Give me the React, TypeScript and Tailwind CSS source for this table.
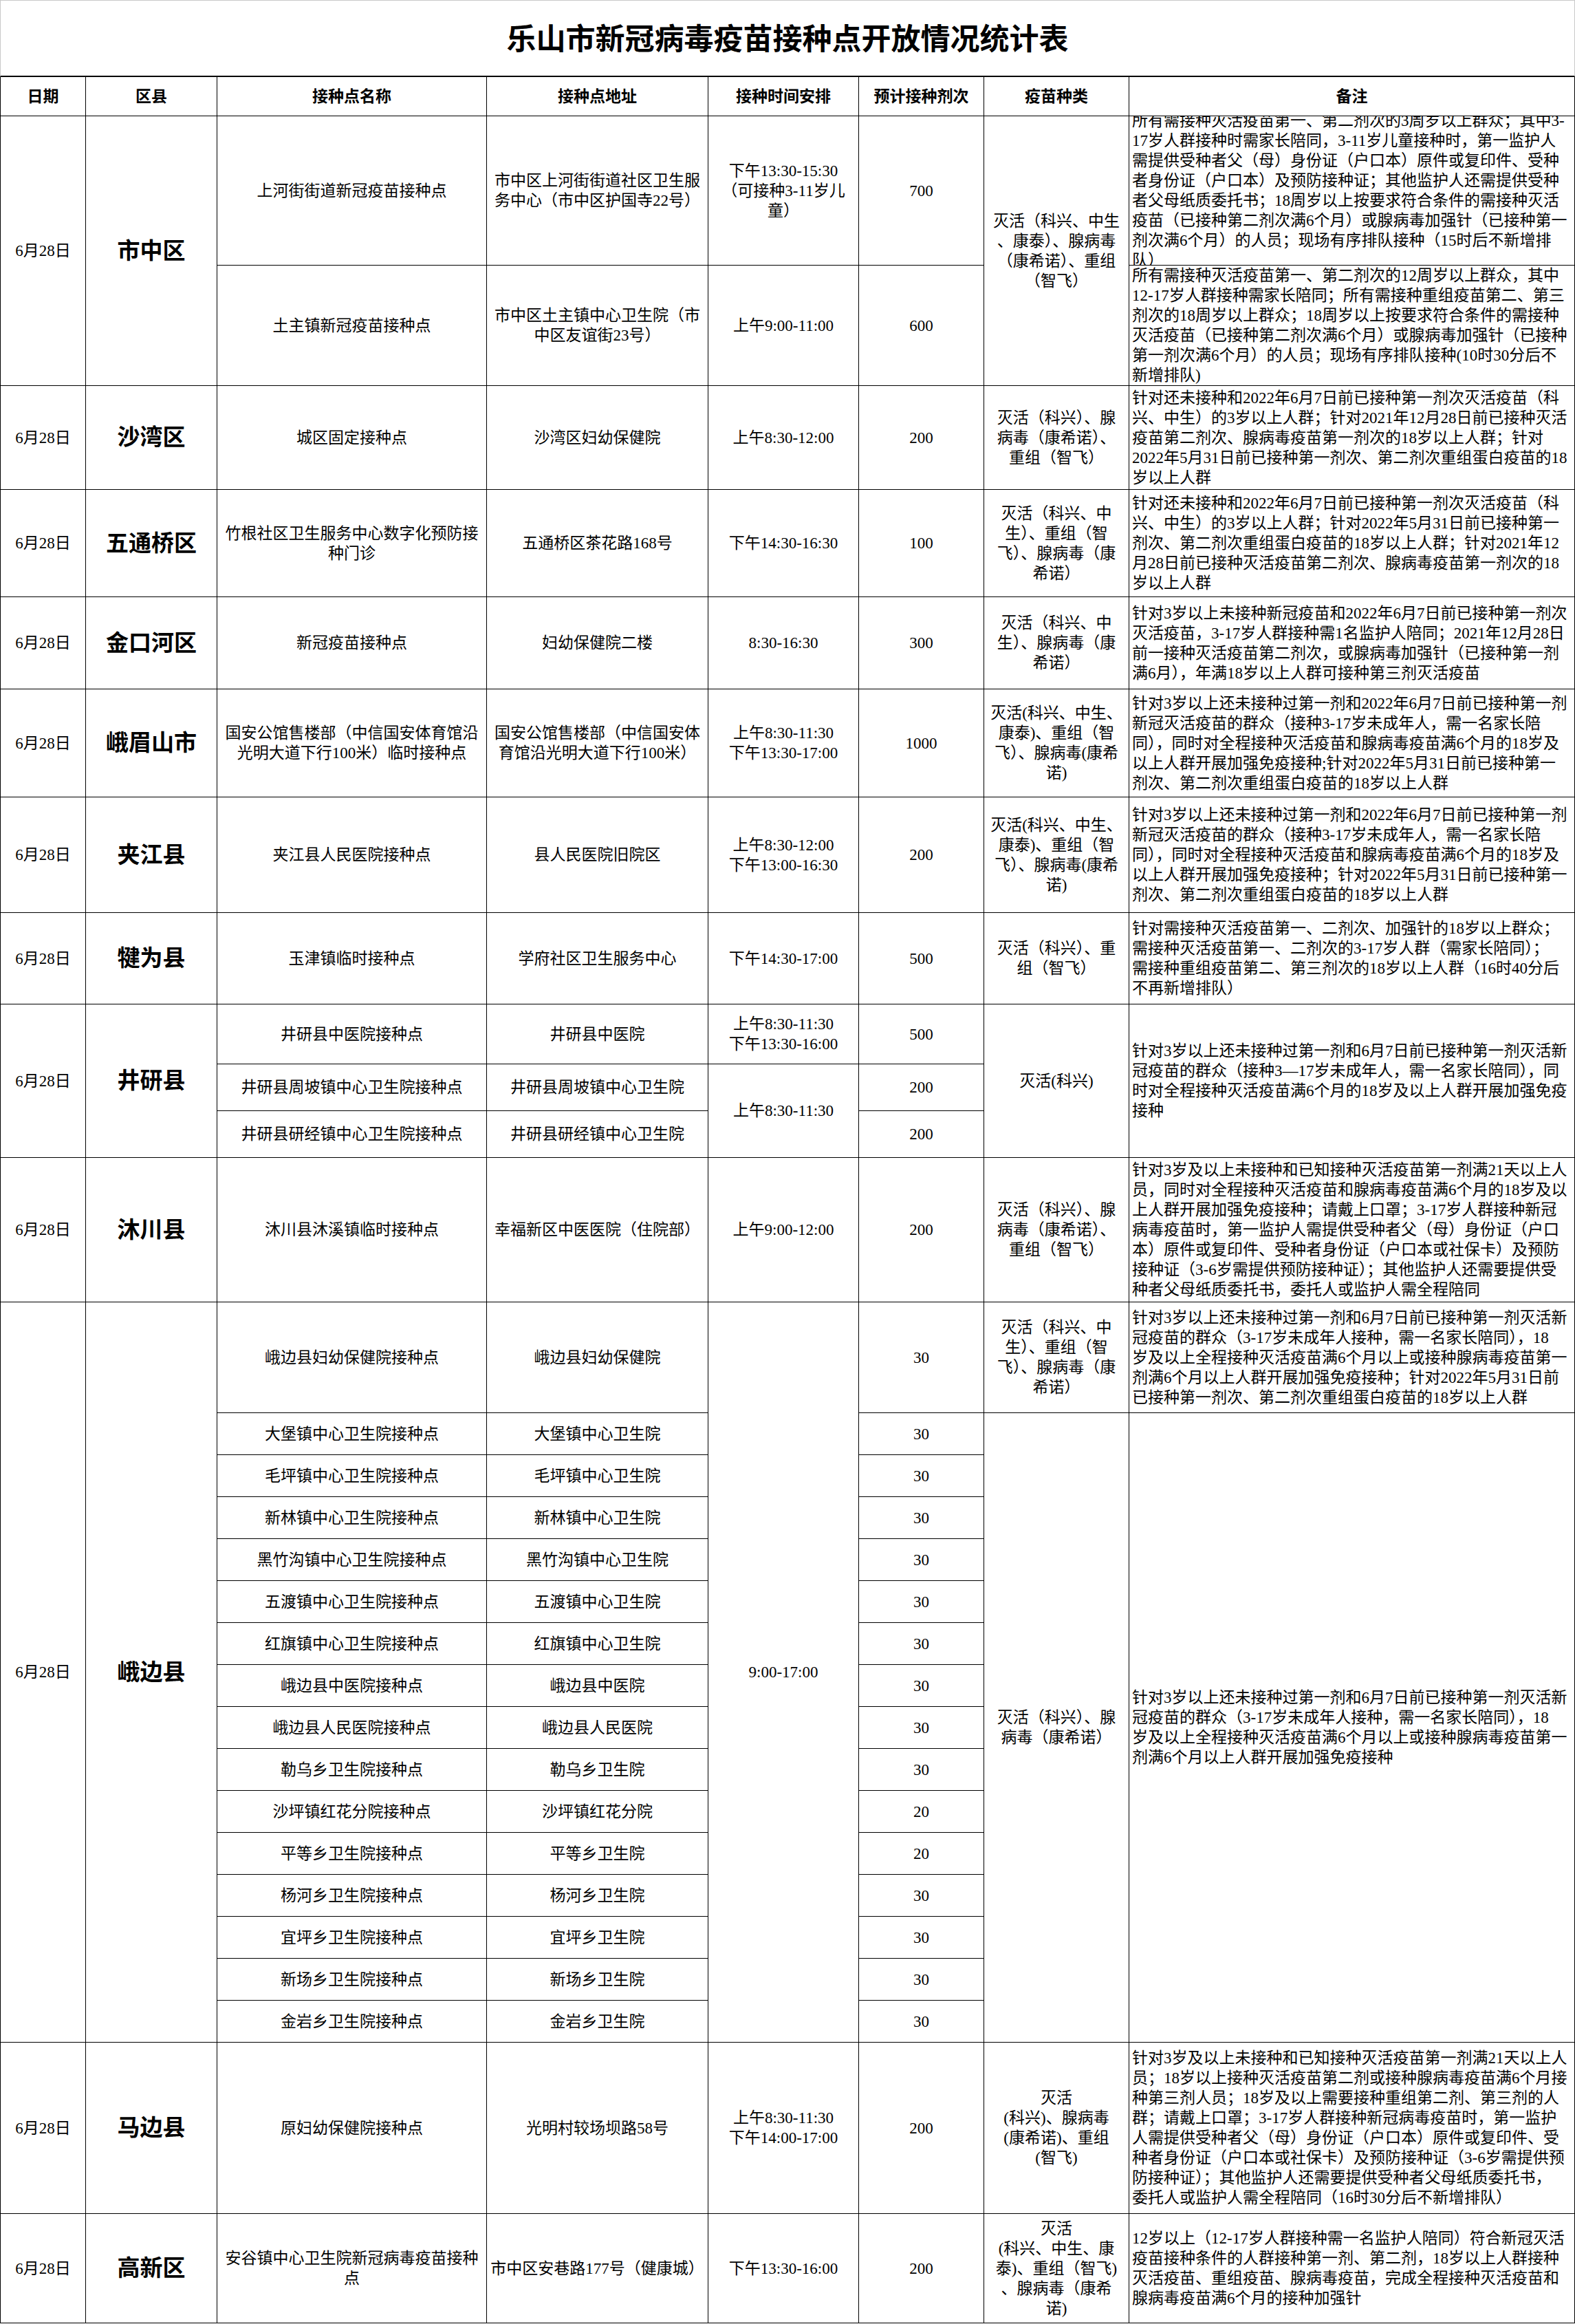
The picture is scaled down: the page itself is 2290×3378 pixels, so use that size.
import React from 'react';

type Cell = {
  t: string[];
  span?: string;
  kind?: 'head' | 'district' | 'remark';
};

const kindClass = {
  plain: 'justify-center text-center text-[23px] leading-[29px]',
  head: 'justify-center text-center text-[23px] leading-[29px] font-bold',
  district: 'justify-center text-center text-[33px] leading-[40px] font-bold',
  remark: 'justify-start text-left text-[23px] leading-[29px] pl-[4px]',
};

const D = '6月28日';

const ebian: [string, string, string][] = [
  ['大堡镇中心卫生院接种点', '大堡镇中心卫生院', '30'],
  ['毛坪镇中心卫生院接种点', '毛坪镇中心卫生院', '30'],
  ['新林镇中心卫生院接种点', '新林镇中心卫生院', '30'],
  ['黑竹沟镇中心卫生院接种点', '黑竹沟镇中心卫生院', '30'],
  ['五渡镇中心卫生院接种点', '五渡镇中心卫生院', '30'],
  ['红旗镇中心卫生院接种点', '红旗镇中心卫生院', '30'],
  ['峨边县中医院接种点', '峨边县中医院', '30'],
  ['峨边县人民医院接种点', '峨边县人民医院', '30'],
  ['勒乌乡卫生院接种点', '勒乌乡卫生院', '30'],
  ['沙坪镇红花分院接种点', '沙坪镇红花分院', '20'],
  ['平等乡卫生院接种点', '平等乡卫生院', '20'],
  ['杨河乡卫生院接种点', '杨河乡卫生院', '30'],
  ['宜坪乡卫生院接种点', '宜坪乡卫生院', '30'],
  ['新场乡卫生院接种点', '新场乡卫生院', '30'],
  ['金岩乡卫生院接种点', '金岩乡卫生院', '30'],
];

const rows: Cell[][] = [
  ['日期', '区县', '接种点名称', '接种点地址', '接种时间安排', '预计接种剂次', '疫苗种类', '备注'].map(
    (h): Cell => ({ t: [h], kind: 'head' })
  ),
  // 市中区
  [
    { t: [D], span: 'row-span-2' },
    { t: ['市中区'], span: 'row-span-2', kind: 'district' },
    { t: ['上河街街道新冠疫苗接种点'] },
    { t: ['市中区上河街街道社区卫生服', '务中心（市中区护国寺22号）'] },
    { t: ['下午13:30-15:30', '（可接种3-11岁儿', '童）'] },
    { t: ['700'] },
    { t: ['灭活（科兴、中生', '、康泰）、腺病毒', '（康希诺）、重组', '（智飞）'], span: 'row-span-2' },
    {
      kind: 'remark',
      t: [
        '所有需接种灭活疫苗第一、第二剂次的3周岁以上群众；其中3-',
        '17岁人群接种时需家长陪同，3-11岁儿童接种时，第一监护人',
        '需提供受种者父（母）身份证（户口本）原件或复印件、受种',
        '者身份证（户口本）及预防接种证；其他监护人还需提供受种',
        '者父母纸质委托书；18周岁以上按要求符合条件的需接种灭活',
        '疫苗（已接种第二剂次满6个月）或腺病毒加强针（已接种第一',
        '剂次满6个月）的人员；现场有序排队接种（15时后不新增排',
        '队）',
      ],
    },
  ],
  [
    { t: ['土主镇新冠疫苗接种点'] },
    { t: ['市中区土主镇中心卫生院（市', '中区友谊街23号）'] },
    { t: ['上午9:00-11:00'] },
    { t: ['600'] },
    {
      kind: 'remark',
      t: [
        '所有需接种灭活疫苗第一、第二剂次的12周岁以上群众，其中',
        '12-17岁人群接种需家长陪同；所有需接种重组疫苗第二、第三',
        '剂次的18周岁以上群众；18周岁以上按要求符合条件的需接种',
        '灭活疫苗（已接种第二剂次满6个月）或腺病毒加强针（已接种',
        '第一剂次满6个月）的人员；现场有序排队接种(10时30分后不',
        '新增排队)',
      ],
    },
  ],
  // 沙湾区
  [
    { t: [D] },
    { t: ['沙湾区'], kind: 'district' },
    { t: ['城区固定接种点'] },
    { t: ['沙湾区妇幼保健院'] },
    { t: ['上午8:30-12:00'] },
    { t: ['200'] },
    { t: ['灭活（科兴）、腺', '病毒（康希诺）、', '重组（智飞）'] },
    {
      kind: 'remark',
      t: [
        '针对还未接种和2022年6月7日前已接种第一剂次灭活疫苗（科',
        '兴、中生）的3岁以上人群；针对2021年12月28日前已接种灭活',
        '疫苗第二剂次、腺病毒疫苗第一剂次的18岁以上人群；针对',
        '2022年5月31日前已接种第一剂次、第二剂次重组蛋白疫苗的18',
        '岁以上人群',
      ],
    },
  ],
  // 五通桥区
  [
    { t: [D] },
    { t: ['五通桥区'], kind: 'district' },
    { t: ['竹根社区卫生服务中心数字化预防接', '种门诊'] },
    { t: ['五通桥区茶花路168号'] },
    { t: ['下午14:30-16:30'] },
    { t: ['100'] },
    { t: ['灭活（科兴、中', '生）、重组（智', '飞）、腺病毒（康', '希诺）'] },
    {
      kind: 'remark',
      t: [
        '针对还未接种和2022年6月7日前已接种第一剂次灭活疫苗（科',
        '兴、中生）的3岁以上人群；针对2022年5月31日前已接种第一',
        '剂次、第二剂次重组蛋白疫苗的18岁以上人群；针对2021年12',
        '月28日前已接种灭活疫苗第二剂次、腺病毒疫苗第一剂次的18',
        '岁以上人群',
      ],
    },
  ],
  // 金口河区
  [
    { t: [D] },
    { t: ['金口河区'], kind: 'district' },
    { t: ['新冠疫苗接种点'] },
    { t: ['妇幼保健院二楼'] },
    { t: ['8:30-16:30'] },
    { t: ['300'] },
    { t: ['灭活（科兴、中', '生）、腺病毒（康', '希诺）'] },
    {
      kind: 'remark',
      t: [
        '针对3岁以上未接种新冠疫苗和2022年6月7日前已接种第一剂次',
        '灭活疫苗，3-17岁人群接种需1名监护人陪同；2021年12月28日',
        '前一接种灭活疫苗第二剂次，或腺病毒加强针（已接种第一剂',
        '满6月），年满18岁以上人群可接种第三剂灭活疫苗',
      ],
    },
  ],
  // 峨眉山市
  [
    { t: [D] },
    { t: ['峨眉山市'], kind: 'district' },
    { t: ['国安公馆售楼部（中信国安体育馆沿', '光明大道下行100米）临时接种点'] },
    { t: ['国安公馆售楼部（中信国安体', '育馆沿光明大道下行100米）'] },
    { t: ['上午8:30-11:30', '下午13:30-17:00'] },
    { t: ['1000'] },
    { t: ['灭活(科兴、中生、', '康泰)、重组（智', '飞）、腺病毒(康希', '诺)'] },
    {
      kind: 'remark',
      t: [
        '针对3岁以上还未接种过第一剂和2022年6月7日前已接种第一剂',
        '新冠灭活疫苗的群众（接种3-17岁未成年人，需一名家长陪',
        '同），同时对全程接种灭活疫苗和腺病毒疫苗满6个月的18岁及',
        '以上人群开展加强免疫接种;针对2022年5月31日前已接种第一',
        '剂次、第二剂次重组蛋白疫苗的18岁以上人群',
      ],
    },
  ],
  // 夹江县
  [
    { t: [D] },
    { t: ['夹江县'], kind: 'district' },
    { t: ['夹江县人民医院接种点'] },
    { t: ['县人民医院旧院区'] },
    { t: ['上午8:30-12:00', '下午13:00-16:30'] },
    { t: ['200'] },
    { t: ['灭活(科兴、中生、', '康泰)、重组（智', '飞）、腺病毒(康希', '诺)'] },
    {
      kind: 'remark',
      t: [
        '针对3岁以上还未接种过第一剂和2022年6月7日前已接种第一剂',
        '新冠灭活疫苗的群众（接种3-17岁未成年人，需一名家长陪',
        '同），同时对全程接种灭活疫苗和腺病毒疫苗满6个月的18岁及',
        '以上人群开展加强免疫接种；针对2022年5月31日前已接种第一',
        '剂次、第二剂次重组蛋白疫苗的18岁以上人群',
      ],
    },
  ],
  // 犍为县
  [
    { t: [D] },
    { t: ['犍为县'], kind: 'district' },
    { t: ['玉津镇临时接种点'] },
    { t: ['学府社区卫生服务中心'] },
    { t: ['下午14:30-17:00'] },
    { t: ['500'] },
    { t: ['灭活（科兴）、重', '组（智飞）'] },
    {
      kind: 'remark',
      t: [
        '针对需接种灭活疫苗第一、二剂次、加强针的18岁以上群众；',
        '需接种灭活疫苗第一、二剂次的3-17岁人群（需家长陪同）；',
        '需接种重组疫苗第二、第三剂次的18岁以上人群（16时40分后',
        '不再新增排队）',
      ],
    },
  ],
  // 井研县
  [
    { t: [D], span: 'row-span-3' },
    { t: ['井研县'], span: 'row-span-3', kind: 'district' },
    { t: ['井研县中医院接种点'] },
    { t: ['井研县中医院'] },
    { t: ['上午8:30-11:30', '下午13:30-16:00'] },
    { t: ['500'] },
    { t: ['灭活(科兴)'], span: 'row-span-3' },
    {
      kind: 'remark',
      span: 'row-span-3',
      t: [
        '针对3岁以上还未接种过第一剂和6月7日前已接种第一剂灭活新',
        '冠疫苗的群众（接种3—17岁未成年人，需一名家长陪同），同',
        '时对全程接种灭活疫苗满6个月的18岁及以上人群开展加强免疫',
        '接种',
      ],
    },
  ],
  [
    { t: ['井研县周坡镇中心卫生院接种点'] },
    { t: ['井研县周坡镇中心卫生院'] },
    { t: ['上午8:30-11:30'], span: 'row-span-2' },
    { t: ['200'] },
  ],
  [{ t: ['井研县研经镇中心卫生院接种点'] }, { t: ['井研县研经镇中心卫生院'] }, { t: ['200'] }],
  // 沐川县
  [
    { t: [D] },
    { t: ['沐川县'], kind: 'district' },
    { t: ['沐川县沐溪镇临时接种点'] },
    { t: ['幸福新区中医医院（住院部）'] },
    { t: ['上午9:00-12:00'] },
    { t: ['200'] },
    { t: ['灭活（科兴）、腺', '病毒（康希诺）、', '重组（智飞）'] },
    {
      kind: 'remark',
      t: [
        '针对3岁及以上未接种和已知接种灭活疫苗第一剂满21天以上人',
        '员，同时对全程接种灭活疫苗和腺病毒疫苗满6个月的18岁及以',
        '上人群开展加强免疫接种；请戴上口罩；3-17岁人群接种新冠',
        '病毒疫苗时，第一监护人需提供受种者父（母）身份证（户口',
        '本）原件或复印件、受种者身份证（户口本或社保卡）及预防',
        '接种证（3-6岁需提供预防接种证）；其他监护人还需要提供受',
        '种者父母纸质委托书，委托人或监护人需全程陪同',
      ],
    },
  ],
  // 峨边县
  [
    { t: [D], span: 'row-span-16' },
    { t: ['峨边县'], span: 'row-span-16', kind: 'district' },
    { t: ['峨边县妇幼保健院接种点'] },
    { t: ['峨边县妇幼保健院'] },
    { t: ['9:00-17:00'], span: 'row-span-16' },
    { t: ['30'] },
    { t: ['灭活（科兴、中', '生）、重组（智', '飞）、腺病毒（康', '希诺）'] },
    {
      kind: 'remark',
      t: [
        '针对3岁以上还未接种过第一剂和6月7日前已接种第一剂灭活新',
        '冠疫苗的群众（3-17岁未成年人接种，需一名家长陪同），18',
        '岁及以上全程接种灭活疫苗满6个月以上或接种腺病毒疫苗第一',
        '剂满6个月以上人群开展加强免疫接种；针对2022年5月31日前',
        '已接种第一剂次、第二剂次重组蛋白疫苗的18岁以上人群',
      ],
    },
  ],
  ...ebian.map(([name, addr, dose], i): Cell[] => {
    const base: Cell[] = [{ t: [name] }, { t: [addr] }, { t: [dose] }];
    if (i > 0) return base;
    return [
      ...base,
      { t: ['灭活（科兴）、腺', '病毒（康希诺）'], span: 'row-span-15' },
      {
        kind: 'remark',
        span: 'row-span-15',
        t: [
          '针对3岁以上还未接种过第一剂和6月7日前已接种第一剂灭活新',
          '冠疫苗的群众（3-17岁未成年人接种，需一名家长陪同），18',
          '岁及以上全程接种灭活疫苗满6个月以上或接种腺病毒疫苗第一',
          '剂满6个月以上人群开展加强免疫接种',
        ],
      },
    ];
  }),
  // 马边县
  [
    { t: [D] },
    { t: ['马边县'], kind: 'district' },
    { t: ['原妇幼保健院接种点'] },
    { t: ['光明村较场坝路58号'] },
    { t: ['上午8:30-11:30', '下午14:00-17:00'] },
    { t: ['200'] },
    { t: ['灭活', '(科兴)、腺病毒', '(康希诺)、重组', '(智飞)'] },
    {
      kind: 'remark',
      t: [
        '针对3岁及以上未接种和已知接种灭活疫苗第一剂满21天以上人',
        '员；18岁以上接种灭活疫苗第二剂或接种腺病毒疫苗满6个月接',
        '种第三剂人员；18岁及以上需要接种重组第二剂、第三剂的人',
        '群；请戴上口罩；3-17岁人群接种新冠病毒疫苗时，第一监护',
        '人需提供受种者父（母）身份证（户口本）原件或复印件、受',
        '种者身份证（户口本或社保卡）及预防接种证（3-6岁需提供预',
        '防接种证）；其他监护人还需要提供受种者父母纸质委托书，',
        '委托人或监护人需全程陪同（16时30分后不新增排队）',
      ],
    },
  ],
  // 高新区
  [
    { t: [D] },
    { t: ['高新区'], kind: 'district' },
    { t: ['安谷镇中心卫生院新冠病毒疫苗接种', '点'] },
    { t: ['市中区安巷路177号（健康城）'] },
    { t: ['下午13:30-16:00'] },
    { t: ['200'] },
    { t: ['灭活', '(科兴、中生、康', '泰)、重组（智飞)', '、腺病毒（康希', '诺)'] },
    {
      kind: 'remark',
      t: [
        '12岁以上（12-17岁人群接种需一名监护人陪同）符合新冠灭活',
        '疫苗接种条件的人群接种第一剂、第二剂，18岁以上人群接种',
        '灭活疫苗、重组疫苗、腺病毒疫苗，完成全程接种灭活疫苗和',
        '腺病毒疫苗满6个月的接种加强针',
      ],
    },
  ],
];

function TableCell({ cell }: { cell: Cell }): JSX.Element {
  const kind = cell.kind ?? 'plain';
  return (
    <div
      className={`flex items-center overflow-hidden border-r border-b border-black bg-white ${kindClass[kind]} ${
        cell.span ?? ''
      }`}
    >
      <div>
        {cell.t.map((line, i) => (
          <div key={i} className="whitespace-nowrap">
            {line}
          </div>
        ))}
      </div>
    </div>
  );
}

export default function App(): JSX.Element {
  return (
    <div className="w-[2290px] bg-white text-black font-['Liberation_Serif','Noto_Sans_CJK_SC',serif]">
      <div className="flex h-[112px] items-center justify-center border-x border-t border-[#c8c8c8] border-b-2 border-b-black pt-[6px] text-[43px] font-bold">
        乐山市新冠病毒疫苗接种点开放情况统计表
      </div>
      <div className="grid grid-cols-[124px_191px_392px_322px_219px_182px_211px_648px] grid-rows-[57px_217px_175px_151px_156px_134px_157px_168px_133px_87px_68px_68px_210px_161px_repeat(15,61px)_249px_159px] border-l border-black">
        {rows.flat().map((cell, i) => (
          <TableCell key={i} cell={cell} />
        ))}
      </div>
    </div>
  );
}
